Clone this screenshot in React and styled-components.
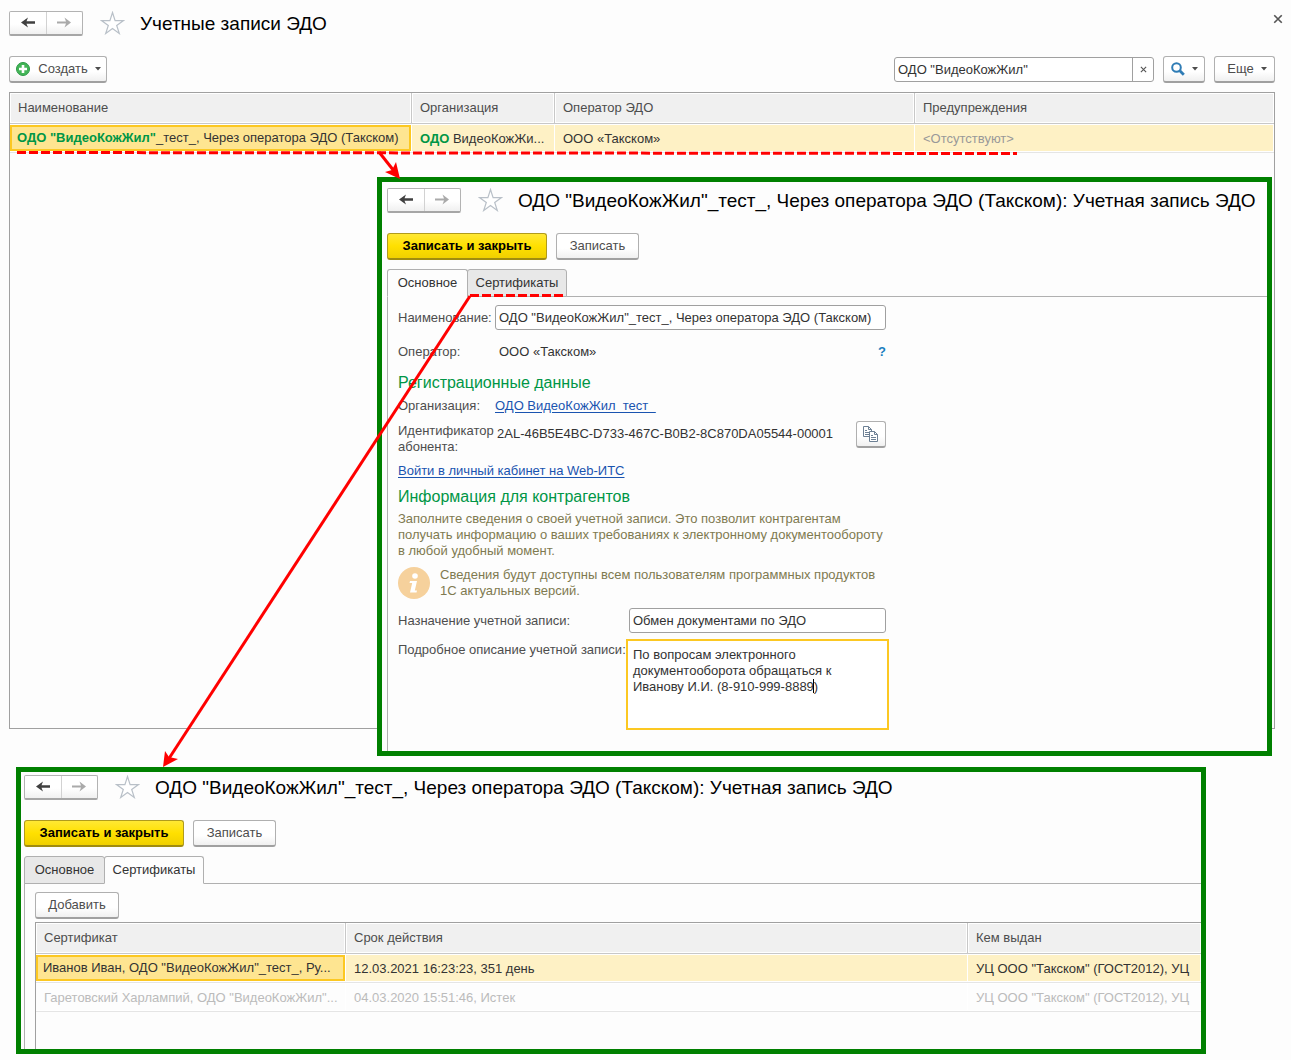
import React from "react";
import styled, { createGlobalStyle, css } from "styled-components";

const Global = createGlobalStyle`
  * { box-sizing: border-box; }
  body { margin: 0; background: #fdfdfd; }
  body, button, input, textarea {
    font-family: "Liberation Sans", Arial, sans-serif;
    font-size: 13px;
    line-height: 16px;
    color: #333;
  }
`;

const Page = styled.div`
  position: relative;
  min-height: 100vh;
  padding-bottom: 6px;
  overflow: hidden;
`;

const ListWindow = styled.main`
  display: flex;
  flex-direction: column;
  padding: 10px 16px 0 9px;
`;

const TitleBar = styled.header`
  display: flex;
  flex: none;
  align-items: center;
  height: 26px;
  margin-bottom: ${(p) => p.$gap}px;
`;

const NavGroup = styled.div`
  display: flex;
  flex: none;
  width: 74px;
  height: 25px;
  margin-right: 17px;
  border: 1px solid #b3b3b3;
  border-bottom: 2px solid #a6a6a6;
  border-radius: 2px;
  background: linear-gradient(#fff 55%, #f0f0f0);
`;

const NavButton = styled.button`
  flex: 1;
  display: flex;
  align-items: center;
  justify-content: center;
  padding: 0;
  border: 0;
  background: none;
  color: ${(p) => (p.$dim ? "#aaa" : "#404040")};
  & + & { border-left: 1px solid #d2d2d2; }
`;

const StarButton = styled.button`
  display: flex;
  flex: none;
  padding: 0;
  margin-right: 15px;
  border: 0;
  background: none;
`;

const Title = styled.h1`
  flex: 1;
  margin: 0;
  padding-top: 2px;
  font-size: 19px;
  line-height: 24px;
  font-weight: 400;
  color: #000;
  white-space: nowrap;
`;

const CloseButton = styled.button`
  display: flex;
  align-self: flex-start;
  padding: 4px 0;
  margin-right: -8px;
  border: 0;
  background: none;
`;

const Toolbar = styled.div`
  display: flex;
  gap: 9px;
  margin-bottom: ${(p) => p.$gap || 9}px;
`;

const Spacer = styled.div`
  flex: 1;
`;

const Button = styled.button`
  display: flex;
  align-items: center;
  justify-content: center;
  gap: 7px;
  height: 27px;
  width: ${(p) => p.$width}px;
  padding: 0 0 0 ${(p) => p.$indent || 0}px;
  border: 1px solid #b0b0b0;
  border-bottom: 2px solid #a0a0a0;
  border-radius: 3px;
  background: linear-gradient(#fff 60%, #f0f0f0);
  color: #4d4d4d;
  white-space: nowrap;
  ${(p) =>
    p.$primary &&
    css`
      border-color: #b09b1c;
      border-bottom-color: #a08c10;
      background: linear-gradient(#ffe834, #ffe000 50%, #f0d000);
      color: #000;
      font-weight: 700;
    `}
`;

const Search = styled.div`
  display: flex;
  width: 260px;
  height: 25px;
  margin-top: 1px;
  border: 1px solid #a0a0a0;
  border-radius: 3px;
  background: #fff;
`;

const SearchInput = styled.input`
  flex: 1;
  min-width: 0;
  padding: 0 3px;
  border: 0;
  background: none;
`;

const ClearButton = styled.button`
  display: flex;
  align-items: center;
  justify-content: center;
  width: 21px;
  padding: 0;
  border: 0;
  border-left: 1px solid #a0a0a0;
  background: none;
`;

const TableFrame = styled.div`
  min-height: ${(p) => p.$height}px;
  border: 1px solid #a0a0a0;
  ${(p) => p.$open && css`border-right: 0; border-bottom: 0;`}
`;

const Table = styled.table`
  width: 100%;
  table-layout: fixed;
  border-collapse: separate;
  border-spacing: 0;
`;

const Col = styled.col`
  width: ${(p) => (p.$width ? p.$width + "px" : "auto")};
`;

const Th = styled.th`
  height: 31px;
  padding: 0 8px;
  border-right: 1px solid #c8c8c8;
  border-bottom: 1px solid #c8c8c8;
  box-shadow: inset 0 0 0 1px #fff;
  background: #f0f0f0;
  color: #4d4d4d;
  font-weight: 400;
  text-align: left;
  &:last-child { border-right: 0; }
`;

const Td = styled.td`
  height: 29px;
  padding: ${(p) => (p.$current ? "1px 1px 1px 0" : "1px 2px 0 8px")};
  border-bottom: 1px solid #e5e5e5;
  box-shadow: inset 0 1px #fff, inset 0 -1px #fff, inset -1px 0 #fff;
  background: ${(p) => (p.$selected ? "#fef1c5" : "transparent")};
  color: ${(p) => (p.$expired ? "#bbb" : p.$muted ? "#999" : "#333")};
  white-space: nowrap;
`;

const CurrentCell = styled.div`
  height: 26px;
  padding: 3px 0 3px 5px;
  border: 2px solid #fcc822;
  background: #fee591;
`;

const Match = styled.b`
  color: #009646;
`;

const AccountWindow = styled.section`
  position: absolute;
  left: 377px;
  top: 177px;
  width: 895px;
  height: 579px;
  display: flex;
  flex-direction: column;
  padding: 5px 0 0 5px;
  border: 5px solid #008000;
  background: #fdfdfd;
`;

const CertWindow = styled.section`
  display: flex;
  flex-direction: column;
  height: 287px;
  margin: 38px 85px 0 16px;
  padding: 2px 0 0 3px;
  border: 5px solid #008000;
  background: #fdfdfd;
  overflow: hidden;
`;

const Tabs = styled.div`
  display: flex;
  border-bottom: 1px solid #b0b0b0;
`;

const Tab = styled.button`
  height: 28px;
  width: ${(p) => p.$width}px;
  margin-bottom: -1px;
  padding: 0;
  border: 1px solid #b0b0b0;
  border-bottom-color: ${(p) => (p.$active ? "#fdfdfd" : "#b0b0b0")};
  border-radius: 3px 3px 0 0;
  background: ${(p) => (p.$active ? "#fdfdfd" : "#e8e8e8")};
  & + & { margin-left: -1px; }
`;

const TabBody = styled.div`
  flex: 1;
  padding: 8px 0 0 10px;
  border-left: 1px solid #b0b0b0;
`;

const Form = styled.form`
  width: 488px;
  display: flex;
  flex-direction: column;
  color: #4d4d4d;
`;

const Field = styled.div`
  display: grid;
  grid-template-columns: ${(p) => p.$label || 97}px 1fr auto;
  align-items: ${(p) => (p.$top ? "start" : "center")};
  min-height: ${(p) => p.$height || 25}px;
  margin-bottom: ${(p) => p.$gap || 0}px;
`;

const Label = styled.label`
  padding-top: ${(p) => p.$pad || 0}px;
  white-space: ${(p) => (p.$wrap ? "normal" : "nowrap")};
`;

const Value = styled.output`
  padding-top: ${(p) => p.$pad || 0}px;
  padding-left: ${(p) => p.$indent || 2}px;
  color: #333;
`;

const TextInput = styled.input`
  height: 25px;
  min-width: 0;
  width: 100%;
  padding: 0 3px;
  border: 1px solid #a0a0a0;
  border-radius: 3px;
  background: #fff;
`;

const AreaWrap = styled.div`
  position: relative;
  margin: 0 -3px 0 -3px;
`;

const TextArea = styled.textarea`
  display: block;
  width: 100%;
  height: 91px;
  padding: 6px 5px;
  border: 2px solid #fcc822;
  background: #fff;
  resize: none;
  outline: 0;
`;

const Caret = styled.span`
  position: absolute;
  left: 187px;
  top: 40px;
  width: 1px;
  height: 14px;
  background: #000;
`;

const SectionTitle = styled.h2`
  margin: 0 0 ${(p) => p.$gap || 0}px;
  font-size: 16px;
  line-height: 20px;
  font-weight: 400;
  color: #009646;
`;

const Link = styled.a`
  justify-self: start;
  color: #1a54b0;
  text-decoration: underline;
  text-underline-offset: 2px;
  white-space: nowrap;
`;

const HelpLink = styled.a`
  color: #1a7fc0;
  font-weight: 700;
  text-decoration: none;
`;

const Note = styled.p`
  margin: 0;
  color: #7f7a50;
  white-space: pre-line;
`;

const InfoRow = styled.div`
  display: flex;
  gap: 10px;
  margin: 8px 0 9px;
`;

const Annotations = styled.svg`
  position: absolute;
  left: 0;
  top: 0;
  pointer-events: none;
`;

const Arrow = ({ right }) => (
  <svg width="14" height="11" viewBox="0 0 14 11" fill="currentColor">
    {right ? (
      <path d="M0 4.5h9L7.500 .5 14 5.500 7.500 10.500 9 6.500H0z" />
    ) : (
      <path d="M14 4.200H5.500L7 .5 0 5.500l7 5-1.500-3.700H14z" />
    )}
  </svg>
);

const CaretDown = () => (
  <svg width="6" height="4" viewBox="0 0 6 4"><path d="M0 0h6L3 3.5z" fill="#4d4d4d" /></svg>
);

const Cross = ({ size }) => (
  <svg width={size} height={size} viewBox="0 0 8 8" stroke="#555" strokeWidth="1.3"><path d="M1 1l6 6M7 1L1 7" /></svg>
);

const Header = ({ title, onClose, gap }) => (
  <TitleBar $gap={gap}>
    <NavGroup>
      <NavButton aria-label="Назад"><Arrow /></NavButton>
      <NavButton $dim aria-label="Вперед"><Arrow right /></NavButton>
    </NavGroup>
    <StarButton aria-label="В избранное">
      <svg width="25" height="24" viewBox="0 0 25 24" fill="#fff" stroke="#b9c0c8" strokeWidth="1.2">
        <path d="M12.500 1.500l2.600 8.100h8.400l-6.800 4.900 2.600 8-6.800-5-6.800 5 2.600-8-6.800-4.900h8.400z" />
      </svg>
    </StarButton>
    <Title>{title}</Title>
    {onClose && <CloseButton aria-label="Закрыть"><Cross size={10} /></CloseButton>}
  </TitleBar>
);

const accountTitle = 'ОДО "ВидеоКожЖил"_тест_, Через оператора ЭДО (Такском): Учетная запись ЭДО';

const AccountHead = ({ active }) => (
  <>
    <Header title={accountTitle} gap={20} />
    <Toolbar>
      <Button $primary $width={160}>Записать и закрыть</Button>
      <Button $width={83}>Записать</Button>
    </Toolbar>
    <Tabs role="tablist">
      <Tab role="tab" $width={81} $active={active === 0}>Основное</Tab>
      <Tab role="tab" $width={100} $active={active === 1}>Сертификаты</Tab>
    </Tabs>
  </>
);

const certificates = [
  ['Иванов Иван, ОДО "ВидеоКожЖил"_тест_, Ру...', "12.03.2021 16:23:23, 351 день", 'УЦ ООО "Такском" (ГОСТ2012), УЦ'],
  ['Гаретовский Харлампий, ОДО "ВидеоКожЖил"...', "04.03.2020 15:51:46, Истек", 'УЦ ООО "Такском" (ГОСТ2012), УЦ'],
];

export default function App() {
  return (
    <Page>
      <Global />
      <ListWindow>
        <Header title="Учетные записи ЭДО" gap={20} onClose />
        <Toolbar>
          <Button $width={98}>
            <svg width="16" height="16" viewBox="0 0 16 16">
              <circle cx="8" cy="8" r="6.5" fill="#43b557" stroke="#2c9a46" />
              <path d="M8 4v8M4 8h8" stroke="#fff" strokeWidth="2.6" />
            </svg>
            Создать
            <CaretDown />
          </Button>
          <Spacer />
          <Search>
            <SearchInput aria-label="Поиск" defaultValue={'ОДО "ВидеоКожЖил"'} />
            <ClearButton aria-label="Очистить"><Cross size={7} /></ClearButton>
          </Search>
          <Button $width={42} aria-label="Найти">
            <svg width="14" height="14" viewBox="0 0 14 14" fill="none" stroke="#2f7cb5">
              <circle cx="5.500" cy="5.500" r="4.300" strokeWidth="2" />
              <path d="M8.800 8.800l4 4" strokeWidth="2.800" />
            </svg>
            <CaretDown />
          </Button>
          <Button $width={61} $indent={5}>Еще<CaretDown /></Button>
        </Toolbar>
        <TableFrame $height={637}>
          <Table>
            <colgroup><Col $width={402} /><Col $width={143} /><Col $width={360} /><Col /></colgroup>
            <thead>
              <tr><Th>Наименование</Th><Th>Организация</Th><Th>Оператор ЭДО</Th><Th>Предупреждения</Th></tr>
            </thead>
            <tbody>
              <tr>
                <Td $selected $current>
                  <CurrentCell><Match>ОДО "ВидеоКожЖил"</Match>_тест_, Через оператора ЭДО (Такском)</CurrentCell>
                </Td>
                <Td $selected><Match>ОДО</Match> ВидеоКожЖи...</Td>
                <Td $selected>ООО «Такском»</Td>
                <Td $selected $muted>&lt;Отсутствуют&gt;</Td>
              </tr>
            </tbody>
          </Table>
        </TableFrame>
      </ListWindow>

      <CertWindow>
        <AccountHead active={1} />
        <TabBody>
          <Toolbar $gap={3}><Button $width={84}>Добавить</Button></Toolbar>
          <TableFrame $open $height={130}>
            <Table>
              <colgroup><Col $width={310} /><Col $width={622} /><Col /></colgroup>
              <thead>
                <tr><Th>Сертификат</Th><Th>Срок действия</Th><Th>Кем выдан</Th></tr>
              </thead>
              <tbody>
                {certificates.map(([name, term, issuer], i) => (
                  <tr key={name}>
                    {i === 0 ? <Td $selected $current><CurrentCell>{name}</CurrentCell></Td> : <Td $expired>{name}</Td>}
                    <Td $selected={i === 0} $expired={i > 0}>{term}</Td>
                    <Td $selected={i === 0} $expired={i > 0}>{issuer}</Td>
                  </tr>
                ))}
              </tbody>
            </Table>
          </TableFrame>
        </TabBody>
      </CertWindow>

      <AccountWindow>
        <AccountHead active={0} />
        <TabBody>
          <Form>
            <Field $gap={9}>
              <Label htmlFor="name">Наименование:</Label>
              <TextInput id="name" defaultValue={'ОДО "ВидеоКожЖил"_тест_, Через оператора ЭДО (Такском)'} />
            </Field>
            <Field $gap={9}>
              <Label htmlFor="operator">Оператор:</Label>
              <Value id="operator" $indent={4}>ООО «Такском»</Value>
              <HelpLink href="#help">?</HelpLink>
            </Field>
            <SectionTitle>Регистрационные данные</SectionTitle>
            <Field $height={26} $gap={2}>
              <span>Организация:</span>
              <Link href="#org">ОДО ВидеоКожЖил_тест_</Link>
            </Field>
            <Field $height={34} $gap={7} $top>
              <Label htmlFor="ident" $wrap $pad={2}>Идентификатор абонента:</Label>
              <Value id="ident" $pad={5}>2AL-46B5E4BC-D733-467C-B0B2-8C870DA05544-00001</Value>
              <Button type="button" $width={30} aria-label="Скопировать">
                <svg width="16" height="16" viewBox="0 0 16 16" fill="#fff" stroke="#6d8094">
                  <path d="M.5.5h5l3 3v7h-8z" />
                  <path d="M5.500.5v3h3M2 4.500h2M2 6.500h5M2 8.500h5" fill="none" />
                  <path d="M6.500 5.500h5l3 3v7h-8z" />
                  <path d="M11.500 5.500v3h3M8 9.500h2M8 11.500h5M8 13.500h5" fill="none" />
                </svg>
              </Button>
            </Field>
            <Field $height={18} $gap={7}><Link href="#cabinet">Войти в личный кабинет на Web-ИТС</Link></Field>
            <SectionTitle $gap={4}>Информация для контрагентов</SectionTitle>
            <Note>{"Заполните сведения о своей учетной записи. Это позволит контрагентам\nполучать информацию о ваших требованиях к электронному документообороту\nв любой удобный момент."}</Note>
            <InfoRow>
              <svg width="32" height="32" viewBox="0 0 32 32">
                <circle cx="16" cy="16" r="16" fill="#f6d19c" />
                <circle cx="17" cy="9" r="2.800" fill="#fff" />
                <path d="M12 14h7l-2.200 9.500h2.200l-.5 2h-6.500l2.200-9.500h-2.700z" fill="#fff" />
              </svg>
              <Note>{"Сведения будут доступны всем пользователям программных продуктов\n1С актуальных версий."}</Note>
            </InfoRow>
            <Field $label={231} $gap={6}>
              <Label htmlFor="purpose">Назначение учетной записи:</Label>
              <TextInput id="purpose" defaultValue="Обмен документами по ЭДО" />
            </Field>
            <Field $label={231} $top>
              <Label htmlFor="details" $pad={3}>Подробное описание учетной записи:</Label>
              <AreaWrap>
                <TextArea id="details" defaultValue={"По вопросам электронного\nдокументооборота обращаться к\nИванову И.И. (8-910-999-8889)"} />
                <Caret />
              </AreaWrap>
            </Field>
          </Form>
        </TabBody>
      </AccountWindow>

      <Annotations width="1291" height="1060" viewBox="0 0 1291 1060" stroke="#f00" strokeWidth="3" fill="none">
        <path d="M17 152.500L1017 153.500" strokeDasharray="9 3" />
        <path d="M379 152l15 19" />
        <path d="M400 179l-15-7 7-2 4-8z" fill="#f00" stroke="none" />
        <path d="M470 295.500h96" strokeDasharray="9 3" />
        <path d="M470 296L168 760" />
        <path d="M163 767l2-16 4 6 9 2z" fill="#f00" stroke="none" />
      </Annotations>
    </Page>
  );
}
